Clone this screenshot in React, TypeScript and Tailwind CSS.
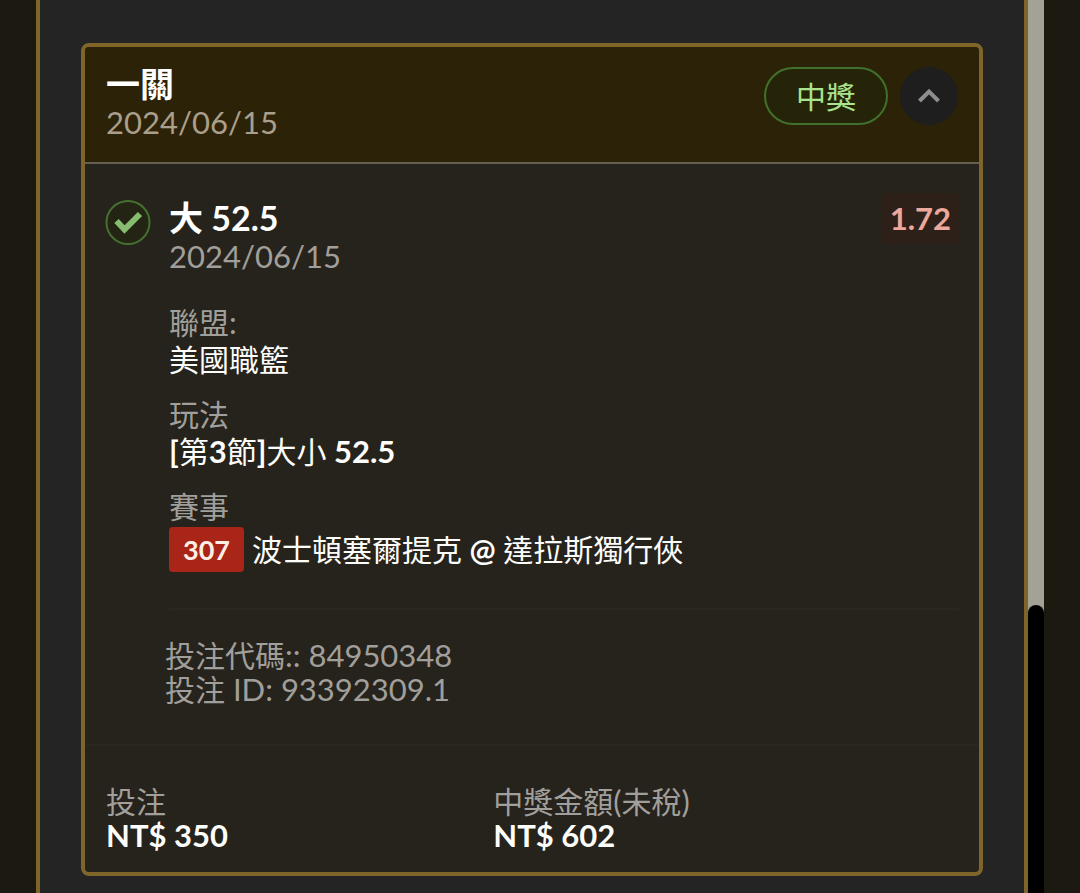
import { useState } from "react";
import type { ReactNode } from "react";

const bet = {
  title: "一關",
  date: "2024/06/15",
  status: "中獎",
  pick: "大 52.5",
  odds: "1.72",
  league: "美國職籃",
  market: "[第3節]大小 52.5",
  matchNo: "307",
  match: "波士頓塞爾提克 @ 達拉斯獨行俠",
  code: "84950348",
  id: "93392309.1",
  stake: "NT$ 350",
  payout: "NT$ 602",
};

// Latin runs are set a little larger than the CJK glyphs around them
function Mixed({ text, strong = false }: { text: string; strong?: boolean }) {
  const runs = text.split(/([\u4e00-\u9fff]+)/).filter(Boolean);
  return (
    <>
      {runs.map((run, i) =>
        /[\u4e00-\u9fff]/.test(run) ? (
          <span key={i} className="text-[30px]">{run}</span>
        ) : (
          <span key={i} className={strong ? "text-[31px] font-bold" : "text-[31px]"}>{run}</span>
        )
      )}
    </>
  );
}

function Field({ label, children }: { label: string; children: ReactNode }) {
  return (
    <div>
      <dt className="text-[#a19f9b]">
        <Mixed text={label} />
      </dt>
      <dd className="text-[#fdfdfb]">{children}</dd>
    </div>
  );
}

function CheckBadge() {
  return (
    <svg viewBox="0 0 46 46" className="size-[46px] shrink-0" fill="none" aria-hidden="true">
      <circle cx="23" cy="23.5" r="21.5" fill="#232413" stroke="#46702f" strokeWidth="2" />
      <path d="M11.5 22 L19.5 30.5 L35 15" stroke="#86bd70" strokeWidth="6" />
    </svg>
  );
}

export default function App() {
  const [open, setOpen] = useState(true);

  return (
    <div className="flex min-h-screen bg-[#1c1911] px-9 font-['Lato','Noto_Sans_CJK_TC',sans-serif] text-[30px] leading-[37px]">
      <main className="min-w-0 flex-1 border-x-4 border-[#80652b] bg-[#242424] px-[41px] pt-[43px] pb-4">
        <article className="overflow-hidden rounded-lg border-4 border-[#80652b] bg-[#26231c]">
          <header className="flex items-start justify-between border-b-2 border-[#655f52] bg-[#2c2208] px-[21px] pt-[18px] pb-[21px]">
            <div className="leading-[38px]">
              <h2 className="text-[34px] font-bold text-white">{bet.title}</h2>
              <p className="text-[31px] text-[#a99f8b]">{bet.date}</p>
            </div>
            <div className="mt-0.5 flex items-center gap-3">
              <span className="flex h-[58px] items-center rounded-full border-2 border-[#41702c] bg-[#262408] px-[30px] text-[#a9e48c]">
                {bet.status}
              </span>
              <button
                type="button"
                aria-expanded={open}
                aria-label="收合"
                onClick={() => setOpen(!open)}
                className="flex size-[58px] items-center justify-center rounded-full bg-[#1e1e1e]"
              >
                <svg viewBox="0 0 24 16" className={open ? "w-6" : "w-6 rotate-180"} fill="none">
                  <path d="M2.5 13 L12 3.5 L21.5 13" stroke="#8e8e8c" strokeWidth="4" />
                </svg>
              </button>
            </div>
          </header>

          {open && (
            <section className="border-b-2 border-[#2a2721] px-5 pt-[35px] pb-[38px]">
              <div className="flex items-start gap-[18px]">
                <CheckBadge />
                <div className="min-w-0 flex-1">
                  <div className="flex items-start justify-between">
                    <div className="leading-[38px]">
                      <h3 className="text-[34px] font-bold text-white">{bet.pick}</h3>
                      <p className="text-[31px] text-[#a19f9b]">{bet.date}</p>
                    </div>
                    <span className="-mt-1.5 rounded bg-[#2c2019] px-2 py-[7px] text-[31px] font-bold text-[#eda79b]">
                      {bet.odds}
                    </span>
                  </div>

                  <dl className="mt-[29px] space-y-[18px] border-b-2 border-[#2a2721] pb-9">
                    <Field label="聯盟:">
                      <Mixed text={bet.league} strong />
                    </Field>
                    <Field label="玩法">
                      <Mixed text={bet.market} strong />
                    </Field>
                    <Field label="賽事">
                      <div className="mt-0.5 flex items-center gap-2">
                        <span className="rounded bg-[#a82518] px-[14px] py-1 text-[27px] font-bold text-[#fdeee6]">
                          {bet.matchNo}
                        </span>
                        <span>
                          <Mixed text={bet.match} strong />
                        </span>
                      </div>
                    </Field>
                  </dl>
                </div>
              </div>

              <div className="mt-7 pl-[60px] leading-[34px] text-[#a19f9b]">
                <p><Mixed text={`投注代碼:: ${bet.code}`} /></p>
                <p><Mixed text={`投注 ID: ${bet.id}`} /></p>
              </div>
            </section>
          )}

          <dl className="grid grid-cols-[5fr_6fr] px-[21px] pt-[38px] pb-5 leading-[34px]">
            <Field label="投注">
              <Mixed text={bet.stake} strong />
            </Field>
            <Field label="中獎金額(未稅)">
              <Mixed text={bet.payout} strong />
            </Field>
          </dl>
        </article>
      </main>

      {/* scroll track */}
      <div className="flex w-4 flex-col bg-[#a3a297]" aria-hidden="true">
        <div className="flex-[21]" />
        <div className="flex-[10] rounded-t-full bg-black" />
      </div>
    </div>
  );
}
